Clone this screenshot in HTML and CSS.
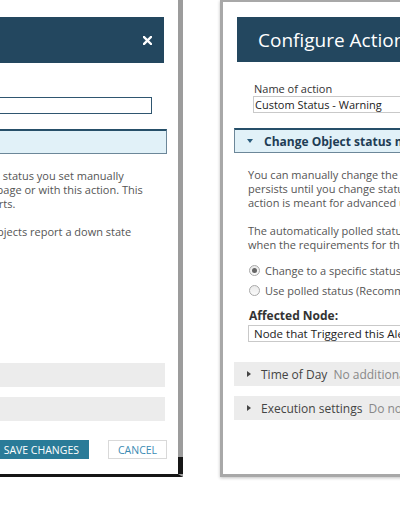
FILE: index.html
```html
<!DOCTYPE html>
<html lang="en">
<head>
  <meta charset="UTF-8">
  <meta name="viewport" content="width=device-width, initial-scale=1">
  <title>Configure Action</title>
  <link rel="stylesheet" href="styles.css">
</head>
<body>
  <div class="stage">

    <!-- dialog in the back, only its right side is on screen -->
    <section class="dialog dialog-back">
      <header class="dialog-head">
        <span class="head-title">Configure Action</span>
        <span class="close">
          <svg width="9" height="9" viewBox="0 0 9 9"><path d="M1 1L8 8M8 1L1 8" stroke="#fff" stroke-width="2.4" stroke-linecap="square"/></svg>
        </span>
      </header>
      <div class="field">
        <label class="field-label">Name of action</label>
        <div class="text-input focused">Custom Status - Warning</div>
      </div>
      <div class="section-head"><span class="caret-down"></span>Change Object status manually</div>
      <div class="section-body">
        <p class="note">
          <span class="line">You can manually change the status of an object. The status you set manually</span>
          <span class="line">persists until you change status on the Node Details page or with this action. This</span>
          <span class="line">action is meant for advanced users who test their alerts.</span>
        </p>
        <p class="note">
          <span class="line">The automatically polled status is used again when objects report a down state</span>
          <span class="line">when the requirements for this are met.</span>
        </p>
        <div class="radio-row"><span class="radio checked"></span>Change to a specific status</div>
        <div class="radio-row"><span class="radio"></span>Use polled status</div>
        <div class="node-label">Affected Node:</div>
        <div class="text-input node-input">Node that Triggered</div>
      </div>
      <div class="bar"><span class="caret-right"></span><span class="bar-title">Time of Day</span><span class="bar-value">No additional time restrictions</span></div>
      <div class="bar"><span class="caret-right"></span><span class="bar-title">Execution settings</span><span class="bar-value">Do not repeat</span></div>
      <div class="actions">
        <button class="btn btn-primary">Save changes</button>
        <button class="btn btn-cancel">Cancel</button>
      </div>
    </section>

    <!-- dialog in front, cut by the right edge -->
    <section class="dialog dialog-front">
      <header class="dialog-head">
        <span class="head-title">Configure Action: Change Object Status</span>
      </header>
      <div class="field">
        <label class="field-label">Name of action</label>
        <div class="text-input">Custom Status - Warning</div>
      </div>
      <div class="section-head"><span class="caret-down"></span>Change Object status manually</div>
      <div class="section-body">
        <p class="note">
          <span class="line">You can manually change the status of an object. The status you set manually</span>
          <span class="line">persists until you change status on the Node Details page or with this action. This</span>
          <span class="line">action is meant for advanced users who test their alerts.</span>
        </p>
        <p class="note">
          <span class="line">The automatically polled status is used again when objects report a down state</span>
          <span class="line">when the requirements for this are met.</span>
        </p>
        <div class="radio-row"><span class="radio checked"></span>Change to a specific status</div>
        <div class="radio-row"><span class="radio"></span>Use polled status (Recommended)</div>
        <div class="node-label">Affected Node:</div>
        <div class="text-input node-input">Node that Triggered this Alert</div>
      </div>
      <div class="bar"><span class="caret-right"></span><span class="bar-title">Time of Day</span><span class="bar-value">No additional time restrictions</span></div>
      <div class="bar"><span class="caret-right"></span><span class="bar-title">Execution settings</span><span class="bar-value">Do not repeat</span></div>
    </section>

  </div>
</body>
</html>
```

FILE: styles.css
```css
body {
  margin: 0;
  width: 400px;
  height: 516px;
  overflow: hidden;
  background: #fff;
  font-family: "Open Sans", "Liberation Sans", sans-serif;
  font-size: 11px;
  color: #555;
}
.stage {
  display: flex;
  align-items: flex-start;
}

/* shared dialog look */
.dialog {
  flex: none;
  width: 480px;
  background: #fff;
  box-sizing: border-box;
  padding-top: 17px;
}
.dialog-back {
  margin-left: -297px;
  height: 477px;
  border-right: 5px solid #9c9c9c;
  border-bottom: 3px solid #161616;
  position: relative;
}
/* dark corner of the frame behind */
.dialog-back::after {
  content: "";
  position: absolute;
  right: -5px;
  bottom: 0;
  width: 5px;
  height: 17px;
  background: #161616;
}
.dialog-front {
  margin-left: 37px;
  height: 477px;
  border: 3px solid #a8a8a8;
  border-top-width: 2px;
  padding-top: 15px;
  box-shadow: 0 1px 3px rgba(0,0,0,0.25);
}

.dialog-head {
  margin: 0 14px;
  height: 46px;
  background: #23475f;
  color: #fff;
  display: flex;
  align-items: center;
  justify-content: space-between;
  padding: 0 12px 0 21px;
}
.dialog-front .dialog-head { height: 45px; }
.head-title {
  font-size: 19px;
  white-space: nowrap;
}
.close {
  display: flex;
}

.field {
  margin: 20px 26px 0 30px;
}
.field-label {
  display: block;
  color: #333;
  line-height: 14px;
  padding-left: 1px;
}
.text-input {
  height: 17px;
  box-sizing: border-box;
  border: 1px solid #c9c9c9;
  color: #222;
  font-size: 11px;
  line-height: 15px;
  padding-left: 1px;
  white-space: nowrap;
  overflow: hidden;
}
.text-input.focused {
  border-color: #2f5670;
}

.section-head {
  margin: 15px 11px 0 11px;
  height: 25px;
  box-sizing: border-box;
  background: #e1f1f8;
  border: 1px solid #6c8799;
  border-top: 2px solid #264f69;
  display: flex;
  align-items: center;
  padding-left: 12px;
  color: #1e3d55;
  font-weight: bold;
  font-size: 12px;
  white-space: nowrap;
}
.caret-down {
  width: 0;
  height: 0;
  border-left: 3.5px solid transparent;
  border-right: 3.5px solid transparent;
  border-top: 4px solid #2a5c7c;
  margin-right: 11px;
}

.section-body {
  padding: 15px 0 0 25px;
}
.note {
  margin: 0 0 14px;
  line-height: 14px;
}
.line {
  display: block;
  white-space: nowrap;
}
.radio-row {
  display: flex;
  align-items: center;
  height: 20px;
  white-space: nowrap;
  margin: 0;
}
.radio-row:first-of-type {
  margin-top: -6px;
}
.radio {
  width: 11px;
  height: 11px;
  box-sizing: border-box;
  border-radius: 50%;
  border: 1px solid #a9a9a9;
  background: linear-gradient(#e9e9e9, #fbfbfb);
  margin: 0 5px 0 1px;
  display: flex;
  align-items: center;
  justify-content: center;
}
.radio.checked::after {
  content: "";
  width: 5px;
  height: 5px;
  border-radius: 50%;
  background: #666;
}
.node-label {
  color: #333;
  font-weight: bold;
  font-size: 12px;
  line-height: 14px;
  margin-top: 9px;
  padding-left: 1px;
}
.node-input {
  margin-top: 2px;
  width: 260px;
  font-size: 11.5px;
  padding-left: 5px;
}

.bar {
  margin: 20px 13px 0 11px;
  height: 24px;
  background: #ececec;
  display: flex;
  align-items: center;
  padding-left: 13px;
  font-size: 12px;
  white-space: nowrap;
}
.bar + .bar { margin-top: 10px; }
.caret-right {
  width: 0;
  height: 0;
  border-top: 3.5px solid transparent;
  border-bottom: 3.5px solid transparent;
  border-left: 4px solid #444;
  margin-right: 10px;
}
.bar-title {
  color: #444;
  margin-right: 6px;
}
.bar-value {
  color: #888;
}

.actions {
  display: flex;
  justify-content: flex-end;
  gap: 19px;
  margin: 19px 11px 0 0;
}
.btn {
  height: 19px;
  font-family: inherit;
  font-size: 10.5px;
  text-transform: uppercase;
  padding: 0 9px;
  border-radius: 0;
  cursor: pointer;
}
.btn-primary {
  background: #2a7b98;
  border: 1px solid #2a7b98;
  color: #fff;
}
.btn-cancel {
  width: 59px;
  background: #fff;
  border: 1px solid #d9d9d9;
  color: #3b8bb3;
}
```
